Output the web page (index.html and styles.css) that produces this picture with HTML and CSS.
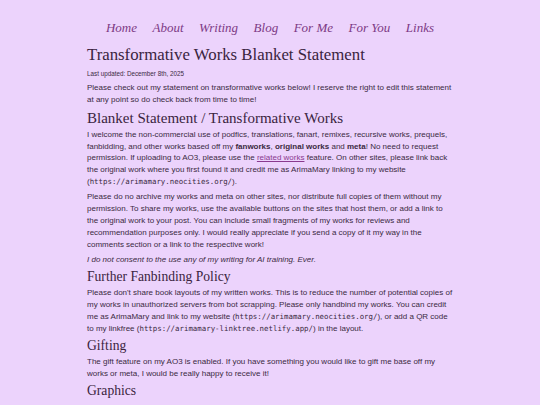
FILE: index.html
```html
<!DOCTYPE html>
<html lang="en">
<head>
<meta charset="utf-8">
<title>Transformative Works Blanket Statement</title>
<link rel="stylesheet" href="styles.css">
</head>
<body>
<nav class="nav">
  <a href="#">Home</a>
  <a href="#">About</a>
  <a href="#">Writing</a>
  <a href="#">Blog</a>
  <a href="#">For Me</a>
  <a href="#">For You</a>
  <a href="#">Links</a>
</nav>
<main class="content">
  <h1 class="title">Transformative Works Blanket Statement</h1>
  <p class="updated">Last updated: December 8th, 2025</p>
  <p>Please check out my statement on transformative works below! I reserve the right to edit this statement at any point so do check back from time to time!</p>
  <h2 class="section">Blanket Statement / Transformative Works</h2>
  <p>I welcome the non-commercial use of podfics, translations, fanart, remixes, recursive works, prequels, fanbidding, and other works based off my <b>fanworks</b>, <b>original works</b> and <b>meta</b>! No need to request permission. If uploading to AO3, please use the <a class="link" href="#">related works</a> feature. On other sites, please link back the original work where you first found it and credit me as ArimaMary linking to my website (<code>https://arimamary.neocities.org/</code>).</p>
  <p>Please do no archive my works and meta on other sites, nor distribute full copies of them without my permission. To share my works, use the available buttons on the sites that host them, or add a link to the original work to your post. You can include small fragments of my works for reviews and recommendation purposes only. I would really appreciate if you send a copy of it my way in the comments section or a link to the respective work!</p>
  <p><i>I do not consent to the use any of my writing for AI training. Ever.</i></p>
  <h3 class="sub">Further Fanbinding Policy</h3>
  <p>Please don't share book layouts of my written works. This is to reduce the number of potential copies of my works in unauthorized servers from bot scrapping. Please only handbind my works. You can credit me as ArimaMary and link to my website (<code>https://arimamary.neocities.org/</code>), or add a QR code to my linkfree (<code>https://arimamary-linktree.netlify.app/</code>) in the layout.</p>
  <h3 class="sub">Gifting</h3>
  <p>The gift feature on my AO3 is enabled. If you have something you would like to gift me base off my works or meta, I would be really happy to receive it!</p>
  <h3 class="sub">Graphics</h3>
</main>
</body>
</html>
```

FILE: styles.css
```css
html, body {
  margin: 0;
  padding: 0;
}
body {
  background: #ecd3fc;
  color: #3b2a42;
  font-family: "Liberation Sans", Arial, sans-serif;
  font-size: 8px;
  line-height: 11.8px;
}
.nav {
  display: flex;
  justify-content: center;
  gap: 15.5px;
  padding-top: 20px;
  height: 24px;
}
.nav a {
  font-family: "Liberation Serif", Georgia, serif;
  font-style: italic;
  font-size: 13px;
  line-height: 16px;
  color: #7d3a85;
  text-decoration: none;
}
.content {
  width: 366px;
  margin: 0 auto;
}
.title, .section, .sub {
  font-family: "Liberation Serif", Georgia, serif;
  font-weight: normal;
  color: #3a2440;
  margin: 0;
}
.title {
  font-size: 16.8px;
  line-height: 22px;
  margin-bottom: 1.5px;
}
.section {
  font-size: 15px;
  line-height: 18px;
  margin-bottom: 1.5px;
}
.sub {
  font-size: 13.6px;
  line-height: 16px;
  margin-bottom: 2px;
}
p {
  margin: 0 0 3.5px;
}
.updated {
  font-size: 6.3px;
  margin-bottom: 3px;
}
code {
  font-family: "DejaVu Sans Mono", monospace;
  font-size: 7.4px;
}
b {
  font-weight: bold;
}
.link {
  color: #8a3a8f;
}
```
